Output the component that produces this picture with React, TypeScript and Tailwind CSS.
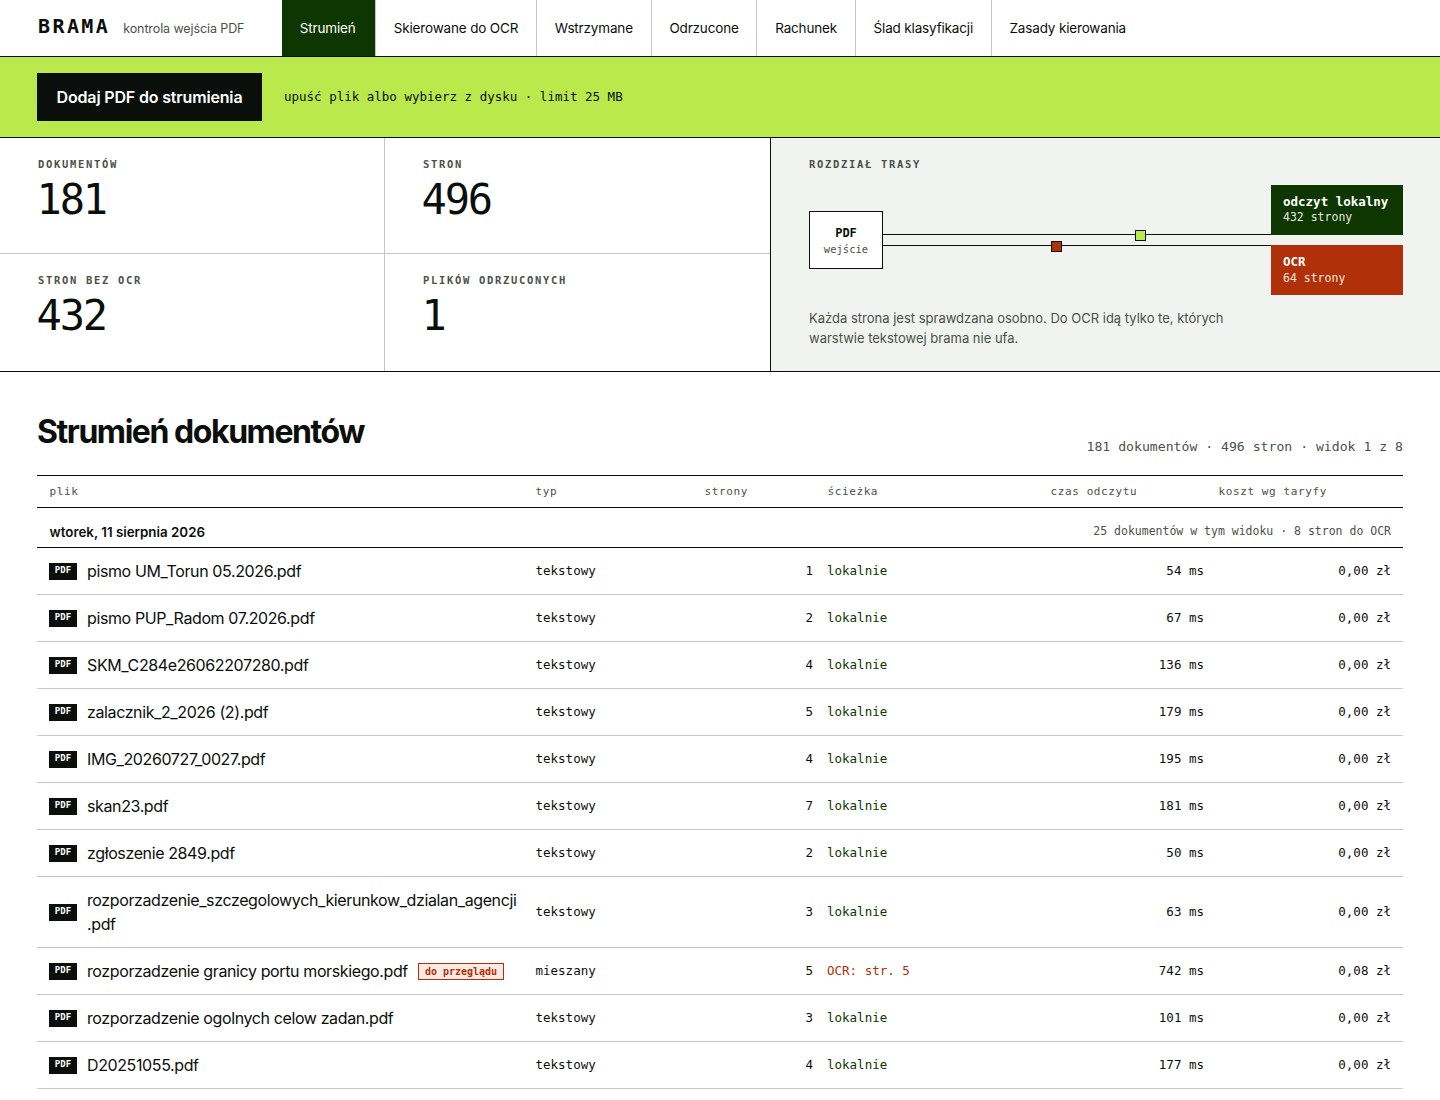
import React from 'react';

const mono = "font-['DejaVu_Sans_Mono',monospace]";

const tabs = ['Strumień', 'Skierowane do OCR', 'Wstrzymane', 'Odrzucone', 'Rachunek', 'Ślad klasyfikacji', 'Zasady kierowania'];

const stats = [
  { label: 'DOKUMENTÓW', value: '181' },
  { label: 'STRON', value: '496' },
  { label: 'STRON BEZ OCR', value: '432' },
  { label: 'PLIKÓW ODRZUCONYCH', value: '1' },
];

const rows = [
  { name: 'pismo UM_Torun 05.2026.pdf', type: 'tekstowy', pages: 1, path: 'lokalnie', time: '54 ms', cost: '0,00 zł' },
  { name: 'pismo PUP_Radom 07.2026.pdf', type: 'tekstowy', pages: 2, path: 'lokalnie', time: '67 ms', cost: '0,00 zł' },
  { name: 'SKM_C284e26062207280.pdf', type: 'tekstowy', pages: 4, path: 'lokalnie', time: '136 ms', cost: '0,00 zł' },
  { name: 'zalacznik_2_2026 (2).pdf', type: 'tekstowy', pages: 5, path: 'lokalnie', time: '179 ms', cost: '0,00 zł' },
  { name: 'IMG_20260727_0027.pdf', type: 'tekstowy', pages: 4, path: 'lokalnie', time: '195 ms', cost: '0,00 zł' },
  { name: 'skan23.pdf', type: 'tekstowy', pages: 7, path: 'lokalnie', time: '181 ms', cost: '0,00 zł' },
  { name: 'zgłoszenie 2849.pdf', type: 'tekstowy', pages: 2, path: 'lokalnie', time: '50 ms', cost: '0,00 zł' },
  { name: 'rozporzadzenie_szczegolowych_kierunkow_dzialan_agencji.pdf', type: 'tekstowy', pages: 3, path: 'lokalnie', time: '63 ms', cost: '0,00 zł' },
  { name: 'rozporzadzenie granicy portu morskiego.pdf', type: 'mieszany', pages: 5, path: 'OCR: str. 5', time: '742 ms', cost: '0,08 zł', review: true },
  { name: 'rozporzadzenie ogolnych celow zadan.pdf', type: 'tekstowy', pages: 3, path: 'lokalnie', time: '101 ms', cost: '0,00 zł' },
  { name: 'D20251055.pdf', type: 'tekstowy', pages: 4, path: 'lokalnie', time: '177 ms', cost: '0,00 zł' },
];

const headers = [
  { label: 'plik', width: 'w-[486px]' },
  { label: 'typ', width: 'w-[169px]' },
  { label: 'strony', width: 'w-[123px]' },
  { label: 'ścieżka', width: 'w-[223px]' },
  { label: 'czas odczytu', width: 'w-[168px]' },
  { label: 'koszt wg taryfy', width: 'w-[197px]' },
];

const StatCell = ({ label, value, index }: { label: string; value: string; index: number }) => (
  <div className={`px-[38px] pt-5 ${index % 2 === 0 ? 'border-r border-[#c4c7c3]' : ''} ${index < 2 ? 'h-[116px] border-b border-[#c4c7c3]' : 'h-[117px]'}`}>
    <div className={`${mono} text-[10.5px] font-bold leading-[13px] tracking-[0.16em] text-[#4a5248]`}>{label}</div>
    <div className={`${mono} -ml-[1.5px] mt-1 text-[42px] leading-[50px] tracking-[-0.05em] text-[#0b0f0b]`}>{value}</div>
  </div>
);

const RoutePanel = () => (
  <div className="flex-1 border-l border-[#0b0f0b] bg-[#f1f3f0] pl-[38px] pr-[37px] pt-5">
    <div className={`${mono} text-[10.5px] font-bold leading-[13px] tracking-[0.16em] text-[#4a5248]`}>ROZDZIAŁ TRASY</div>
    <div className="relative mt-[14px] h-[110px]">
      <div className="absolute left-0 top-[26px] flex h-[58px] w-[74px] flex-col items-center justify-center border border-[#0b0f0b] bg-white pt-[2px]">
        <span className={`${mono} text-xs font-bold leading-4 text-[#0b0f0b]`}>PDF</span>
        <span className={`${mono} text-[10.5px] leading-4 text-[#4a5248]`}>wejście</span>
      </div>
      <div className="absolute left-[74px] top-[49px] h-px w-[388px] bg-[#0b0f0b]" />
      <div className="absolute left-[74px] top-[60px] h-px w-[388px] bg-[#0b0f0b]" />
      <div className="absolute left-[326px] top-[45px] h-[11px] w-[11px] border border-[#0b0f0b] bg-[#b9e94a]" />
      <div className="absolute left-[242px] top-[56px] h-[11px] w-[11px] border border-[#0b0f0b] bg-[#b03009]" />
      <div className="absolute left-[462px] top-0 h-[50px] w-[132px] bg-[#0d3600] px-3 pt-[9px] text-white">
        <div className={`${mono} text-[12.5px] font-bold leading-4`}>odczyt lokalny</div>
        <div className={`${mono} text-[11.5px] leading-[14px] text-[#e3e9df]`}>432 strony</div>
      </div>
      <div className="absolute left-[462px] top-[60px] h-[50px] w-[132px] bg-[#b03009] px-3 pt-[9px] text-white">
        <div className={`${mono} text-[12.5px] font-bold leading-4`}>OCR</div>
        <div className={`${mono} text-[11.5px] leading-4 text-[#f6e4dc]`}>64 strony</div>
      </div>
    </div>
    <p className="mt-[13px] w-[440px] text-[13px] leading-5 text-[#4a5248]">
      Każda strona jest sprawdzana osobno. Do OCR idą tylko te, których warstwie tekstowej brama nie ufa.
    </p>
  </div>
);

export default function App() {
  return (
    <div className="min-h-[1100px] overflow-hidden bg-white font-['Inter',sans-serif] text-[#0b0f0b]">
      <header className="flex h-[57px] items-stretch border-b border-[#0b0f0b]">
        <div className="flex w-[282px] shrink-0 items-baseline pl-[38px] pt-4">
          <span className={`${mono} text-[20px] font-bold leading-5 tracking-[0.12em]`}>BRAMA</span>
          <span className="ml-[13px] text-[12.5px] tracking-[-0.1px] text-[#4a5248]">kontrola wejścia PDF</span>
        </div>
        <nav className="flex">
          {tabs.map((tab, i) => (
            <div
              key={tab}
              className={`flex items-center px-[17.75px] text-[13.5px] tracking-[-0.012em] ${i === 0 ? 'w-[94px] bg-[#0d3600] text-white' : ''} ${i < tabs.length - 1 ? 'border-r border-[#c4c7c3]' : ''}`}
            >
              {tab}
            </div>
          ))}
        </nav>
      </header>

      <div className="flex h-[81px] items-center border-b border-[#0b0f0b] bg-[#b9e94a] pl-[37px]">
        <button className="h-12 w-[225px] bg-[#0b0f0b] text-base font-semibold tracking-[-0.01em] text-white">Dodaj PDF do strumienia</button>
        <span className={`${mono} ml-[22px] text-[12.5px]`}>upuść plik albo wybierz z dysku · limit 25 MB</span>
      </div>

      <section className="flex h-[234px] border-b border-[#0b0f0b]">
        <div className="grid w-[770px] shrink-0 grid-cols-2">
          {stats.map((s, i) => (
            <StatCell key={s.label} label={s.label} value={s.value} index={i} />
          ))}
        </div>
        <RoutePanel />
      </section>

      <main className="px-[37px]">
        <div className="flex h-[103px] items-end justify-between pb-[18px]">
          <h1 className="mb-[1px] text-[32px] font-bold leading-[48px] tracking-[-0.045em]">Strumień dokumentów</h1>
          <span className={`${mono} text-[13.15px] leading-5 text-[#4a5248]`}>181 dokumentów · 496 stron · widok 1 z 8</span>
        </div>

        <table className="w-[1366px] table-fixed border-collapse">
          <thead>
            <tr className="h-[32px] border-y border-[#0b0f0b]">
              {headers.map((h) => (
                <th key={h.label} className={`${h.width} ${mono} pl-[12.5px] pr-3 pt-[2px] text-left text-[11px] font-normal tracking-[0.055em] text-[#4a5248]`}>
                  {h.label}
                </th>
              ))}
            </tr>
          </thead>
          <tbody>
            <tr className="h-[40px] border-b border-[#0b0f0b]">
              <td colSpan={3} className="pl-[12.5px] pr-3 pt-[10px] text-[13.35px] font-semibold">wtorek, 11 sierpnia 2026</td>
              <td colSpan={3} className={`${mono} px-3 pt-[8px] text-right text-[11.5px] text-[#4a5248]`}>
                25 dokumentów w tym widoku · 8 stron do OCR
              </td>
            </tr>
            {rows.map((r) => (
              <tr key={r.name} className="border-b border-[#c4c7c3]">
                <td className="py-[11px] pl-3 pr-[5px]">
                  <div className="flex items-center">
                    <span className={`${mono} flex h-[17px] w-[28px] shrink-0 items-center justify-center bg-[#0b0f0b] text-[9px] font-bold text-white`}>PDF</span>
                    <span className="ml-[10px] text-base leading-6 tracking-[-0.024em] [overflow-wrap:anywhere]">{r.name}</span>
                    {r.review && (
                      <span className={`${mono} ml-[10px] shrink-0 whitespace-nowrap border border-[#b03009] bg-[#fdeae4] px-[6px] text-[10px] font-bold leading-[15px] text-[#b03009]`}>do przeglądu</span>
                    )}
                  </div>
                </td>
                <td className={`${mono} pl-[12.5px] pr-3 text-[12.5px]`}>{r.type}</td>
                <td className={`${mono} py-0 pl-3 pr-[2px] text-right text-[12.5px]`}>{r.pages}</td>
                <td className={`${mono} px-3 text-[12.5px] ${r.review ? 'text-[#b03009]' : 'text-[#0d3600]'}`}>{r.path}</td>
                <td className={`${mono} py-0 pl-3 pr-[2px] text-right text-[12.5px]`}>{r.time}</td>
                <td className={`${mono} px-3 text-right text-[12.5px]`}>{r.cost}</td>
              </tr>
            ))}
          </tbody>
        </table>
      </main>
    </div>
  );
}
